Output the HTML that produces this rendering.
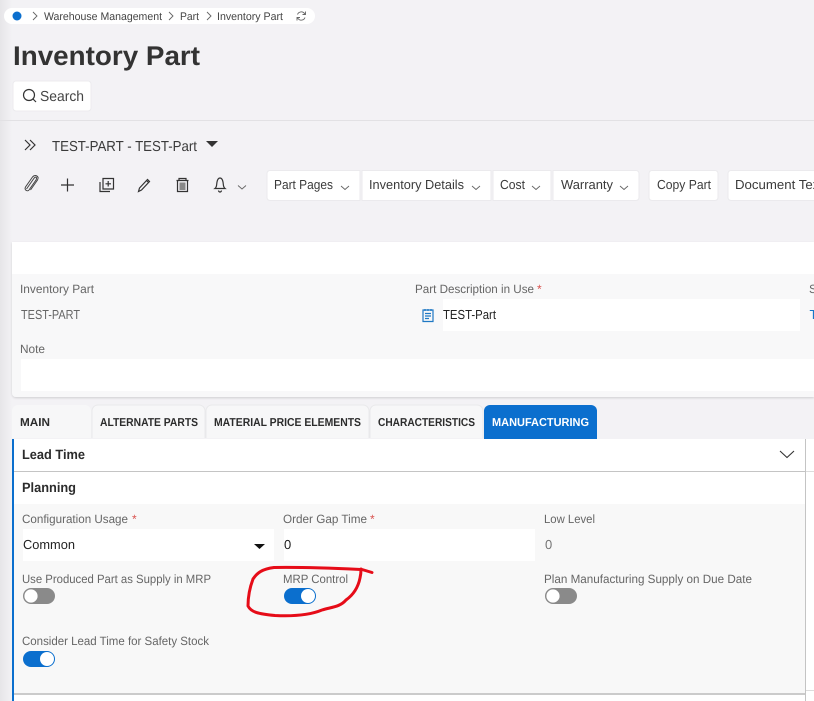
<!DOCTYPE html>
<html><head><meta charset="utf-8"><title>Inventory Part</title>
<style>
html,body{margin:0;padding:0;width:814px;height:701px;overflow:hidden;background:#f3f2f5}
svg{display:block;filter:blur(.3px)}
text{font-family:"Liberation Sans",Arial,sans-serif;font-size:12.500px;fill:#444;text-rendering:geometricPrecision}
.l{font-size:12px;fill:#666}
.t{font-size:11.500px;fill:#2c2c2c;font-weight:bold}
.b{font-size:13px;fill:#3a3a3a}
.i{fill:none;stroke:#333;stroke-width:1.200}
.c{fill:none;stroke:#666;stroke-width:.9}
</style></head><body>
<svg width="814" height="701" viewBox="0 0 814 701" xmlns="http://www.w3.org/2000/svg">
<defs>
<filter id="s" x="-2%" y="-5%" width="104%" height="110%"><feDropShadow dx="0" dy="1" stdDeviation="1" flood-color="#000" flood-opacity=".15"/></filter>
<linearGradient id="g" x1="0" x2="1" y1="0" y2="0"><stop offset="0" stop-color="#e6e5e8"/><stop offset="1" stop-color="#f3f2f5"/></linearGradient>
</defs>
<rect width="814" height="701" fill="#f3f2f5"/>
<rect width="12" height="701" fill="url(#g)"/>
<!-- breadcrumb -->
<rect x="4" y="8" width="311" height="16" rx="8" fill="#fff"/>
<circle cx="17" cy="16" r="4.500" fill="#0b6fce"/>
<path class="c" d="M33 12l4 4-4 4M169 12l4 4-4 4M207 12l4 4-4 4"/>
<text x="44" y="20" style="font-size:11px" textLength="118" lengthAdjust="spacingAndGlyphs">Warehouse Management</text>
<text x="180" y="20" style="font-size:11px" textLength="19" lengthAdjust="spacingAndGlyphs">Part</text>
<text x="217" y="20" style="font-size:11px" textLength="66" lengthAdjust="spacingAndGlyphs">Inventory Part</text>
<path class="c" d="M297.500 14.500a4 4 0 0 1 7-1l1 1M305 17.500a4 4 0 0 1-7 1l-1-1M305.500 11.500v3h-3M297 20.500v-3h3"/>
<!-- title -->
<text x="13" y="65" textLength="187" lengthAdjust="spacingAndGlyphs" style="font-size:27px;font-weight:bold;fill:#333">Inventory Part</text>
<rect x="13" y="81" width="78" height="30" rx="3" fill="#fff" stroke="#ecebee"/>
<circle cx="29" cy="95" r="5.500" class="i"/><path class="i" d="M33 99l3 3"/>
<text x="40" y="101" textLength="44" lengthAdjust="spacingAndGlyphs" style="font-size:14.500px">Search</text>
<rect x="0" y="120" width="814" height="1" fill="#e2e1e4"/>
<!-- record title -->
<path class="i" d="M25 140l5 5-5 5M30 140l5 5-5 5"/>
<text x="52" y="151" textLength="145" lengthAdjust="spacingAndGlyphs" style="font-size:14.500px;fill:#3a3a3a">TEST-PART - TEST-Part</text>
<path d="M206 141h12l-6 6z" fill="#333"/>
<!-- toolbar icons -->
<path fill="none" stroke="#444" stroke-width="1" d="M26.500 189l7-10c2-3 4-2 2.500 1l-7 10c-1.500 2-5 0-3.500-3l7-10c2.500-3 7-1 5 3l-7 10"/>
<path class="i" d="M61 185h13M67.500 178.500v13"/>
<path class="i" d="M103 178.500h10.500v10.500H103zM100 182v9.500h10M108.200 181v5.500M105.500 183.800h5.500"/>
<path class="i" d="M138.500 191.500l1-3.500 8-8.500 2 2-8 8.500zM146.500 180.500l2 2"/>
<path class="i" d="M176.500 180.500h12M179 180.500v-2h7v2M177.500 180.500v11h10v-11"/><path d="M179.500 182.500h6v7.500h-6z" fill="#888"/>
<path class="i" d="M215 188.500c2-1.500 1.500-4 2-6.500s1.500-4 3-4 2.500 1.500 3 4 0 5 2 6.500zM218.500 190.500a1.500 1.500 0 0 0 3 0"/>
<path class="c" d="M238 185.500l4 3.500 4-3.500"/>
<!-- toolbar buttons -->
<g fill="#fff" stroke="#ebeaed">
<path d="M270 170.500h90v30h-90a3 3 0 0 1-3-3v-24a3 3 0 0 1 3-3z"/>
<rect x="362" y="170.500" width="129" height="30"/>
<rect x="493" y="170.500" width="58" height="30"/>
<path d="M553 170.500h83a3 3 0 0 1 3 3v24a3 3 0 0 1-3 3h-83z"/>
<rect x="649" y="170.500" width="69" height="30" rx="3"/>
<rect x="728" y="170.500" width="92" height="30" rx="3"/>
</g>
<text class="b" x="274" y="189" textLength="59" lengthAdjust="spacingAndGlyphs">Part Pages</text>
<text class="b" x="369" y="189" textLength="95" lengthAdjust="spacingAndGlyphs">Inventory Details</text>
<text class="b" x="500" y="189" textLength="25" lengthAdjust="spacingAndGlyphs">Cost</text>
<text class="b" x="561" y="189" textLength="52" lengthAdjust="spacingAndGlyphs">Warranty</text>
<text class="b" x="657" y="189" textLength="54" lengthAdjust="spacingAndGlyphs">Copy Part</text>
<text class="b" x="735" y="189" textLength="88" lengthAdjust="spacingAndGlyphs">Document Text</text>
<path class="c" d="M341 186l4 3.500 4-3.500M472 186l4 3.500 4-3.500M532 186l4 3.500 4-3.500M620 186l4 3.500 4-3.500"/>
<!-- header panel -->
<path d="M12 242H814V397H16a4 4 0 0 1-4-4z" fill="#f8f8f9" filter="url(#s)"/>
<rect x="12" y="242" width="802" height="32" fill="#fff"/>
<text class="l" x="20" y="293" textLength="74" lengthAdjust="spacingAndGlyphs">Inventory Part</text>
<text x="21" y="319" textLength="59" lengthAdjust="spacingAndGlyphs" style="fill:#666;font-size:13px">TEST-PART</text>
<text class="l" x="20" y="353" textLength="25" lengthAdjust="spacingAndGlyphs">Note</text>
<rect x="21" y="359" width="793" height="32" fill="#fff"/>
<text class="l" x="415" y="293" textLength="119" lengthAdjust="spacingAndGlyphs">Part Description in Use</text>
<text x="537" y="293" style="font-size:12px;fill:#d9534f">*</text>
<rect x="443" y="299" width="357" height="32" fill="#fff"/>
<path fill="none" stroke="#1f78c4" stroke-width="1.200" d="M423 310h10v11.500h-10zM425 309v2M428 309v2M431 309v2M425 313.500h6M425 316h6M425 318.500h4"/>
<text x="443" y="319" textLength="53" lengthAdjust="spacingAndGlyphs" style="fill:#222;font-size:13px">TEST-Part</text>
<text class="l" x="809" y="293">S</text>
<text x="809.500" y="319" style="fill:#1878c8;font-size:13px">T</text>
<!-- tabs -->
<g fill="#f7f7f8" stroke="#e9e9eb">
<path d="M12 438v-27a6 6 0 0 1 6-6h67a6 6 0 0 1 6 6v27z" stroke="none"/>
<path d="M92 438v-27a6 6 0 0 1 6-6h101a6 6 0 0 1 6 6v27"/>
<path d="M206 438v-27a6 6 0 0 1 6-6h151a6 6 0 0 1 6 6v27"/>
<path d="M370 438v-27a6 6 0 0 1 6-6h101a6 6 0 0 1 6 6v27"/>
</g>
<path d="M484 439v-28a6 6 0 0 1 6-6h101a6 6 0 0 1 6 6v28z" fill="#0b6fce"/>
<text class="t" x="20" y="426" textLength="30" lengthAdjust="spacingAndGlyphs">MAIN</text>
<text class="t" x="100" y="426" textLength="98" lengthAdjust="spacingAndGlyphs">ALTERNATE PARTS</text>
<text class="t" x="214" y="426" textLength="147" lengthAdjust="spacingAndGlyphs">MATERIAL PRICE ELEMENTS</text>
<text class="t" x="378" y="426" textLength="97" lengthAdjust="spacingAndGlyphs">CHARACTERISTICS</text>
<text class="t" x="492" y="426" textLength="97" lengthAdjust="spacingAndGlyphs" style="fill:#fff">MANUFACTURING</text>
<!-- content -->
<rect x="12" y="439" width="802" height="262" fill="#fff"/>
<rect x="12" y="439" width="2" height="262" fill="#0b6fce"/>
<rect x="14" y="471" width="792" height="1" fill="#c4c4c4"/>
<rect x="806" y="471" width="8" height="1" fill="#dcdcdc"/>
<rect x="805" y="439" width="1" height="262" fill="#c4c4c4"/>
<text x="22" y="459" textLength="63" lengthAdjust="spacingAndGlyphs" style="font-size:13.500px;font-weight:bold;fill:#2c2c2c">Lead Time</text>
<path d="M780 451l7 6.500 7-6.500" fill="none" stroke="#333" stroke-width="1.100"/>
<text x="22" y="492" textLength="54" lengthAdjust="spacingAndGlyphs" style="font-size:13.500px;font-weight:bold;fill:#2c2c2c">Planning</text>
<rect x="14" y="504" width="791" height="189" fill="#f8f8f8"/>
<rect x="14" y="693" width="791" height="2" fill="#cbcbcb"/>
<rect x="806" y="690" width="8" height="1" fill="#dcdcdc"/>
<text class="l" x="22" y="523" textLength="106" lengthAdjust="spacingAndGlyphs">Configuration Usage</text>
<text x="132" y="523" style="font-size:12px;fill:#d9534f">*</text>
<rect x="23" y="529" width="251" height="32" fill="#fff"/>
<text x="23" y="549" textLength="52" lengthAdjust="spacingAndGlyphs" style="font-size:13px;fill:#222">Common</text>
<path d="M254 544h11l-5.500 5z" fill="#111"/>
<text class="l" x="283" y="523" textLength="84" lengthAdjust="spacingAndGlyphs">Order Gap Time</text>
<text x="370" y="523" style="font-size:12px;fill:#d9534f">*</text>
<rect x="284" y="529" width="251" height="32" fill="#fff"/>
<text x="284" y="549" style="font-size:13px;fill:#222">0</text>
<text class="l" x="544" y="523" textLength="51" lengthAdjust="spacingAndGlyphs">Low Level</text>
<text x="545" y="549" style="font-size:13px;fill:#777">0</text>
<text class="l" x="22" y="583" textLength="189" lengthAdjust="spacingAndGlyphs">Use Produced Part as Supply in MRP</text>
<text class="l" x="283" y="583" textLength="65" lengthAdjust="spacingAndGlyphs">MRP Control</text>
<text class="l" x="544" y="583" textLength="208" lengthAdjust="spacingAndGlyphs">Plan Manufacturing Supply on Due Date</text>
<text class="l" x="22" y="645" textLength="187" lengthAdjust="spacingAndGlyphs">Consider Lead Time for Safety Stock</text>
<!-- toggles -->
<rect x="23" y="588" width="32" height="16" rx="8" fill="#8a8a8a"/><circle cx="31" cy="596" r="7" fill="#fff" stroke="#8a8a8a" stroke-width=".8"/>
<rect x="284" y="588" width="32" height="16" rx="8" fill="#0b6fce"/><circle cx="308" cy="596" r="7" fill="#fff"/>
<rect x="545" y="588" width="32" height="16" rx="8" fill="#8a8a8a"/><circle cx="553" cy="596" r="7" fill="#fff" stroke="#8a8a8a" stroke-width=".8"/>
<rect x="23" y="651" width="32" height="16" rx="8" fill="#0b6fce"/><circle cx="47" cy="659" r="7" fill="#fff"/>
<!-- red annotation -->
<path d="M372 572.500L362 569.500C340 568.500 310 567 274 567.500C262 569 257 573 253 579C250 587 248 596 248 606C251 612 258 614 275 615.500C295 616.500 310 615 322 610C332 607 340 607 346 600C353 595 358 588 360 578C361 574 361 571 361 569" fill="none" stroke="#e60c18" stroke-width="3" stroke-linecap="round" stroke-linejoin="round"/>
</svg>
</body></html>
